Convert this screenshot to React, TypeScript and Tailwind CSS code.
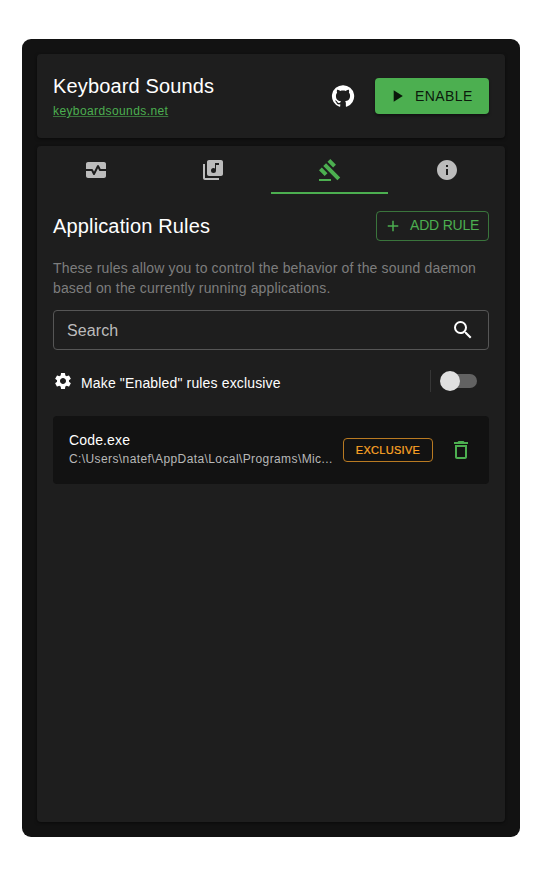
import React from "react";
import {
  MdMonitorHeart,
  MdLibraryMusic,
  MdGavel,
  MdInfo,
  MdPlayArrow,
  MdAdd,
  MdSearch,
  MdSettings,
  MdDeleteOutline,
} from "react-icons/md";

const tabs = [
  { name: "status", Icon: MdMonitorHeart },
  { name: "profiles", Icon: MdLibraryMusic },
  { name: "rules", Icon: MdGavel },
  { name: "info", Icon: MdInfo },
];

function GitHubIcon() {
  return (
    <svg viewBox="0 0 24 24" className="size-6 fill-white">
      <path d="M12 1.27a11 11 0 00-3.48 21.46c.55.09.73-.28.73-.55v-1.84c-3.03.64-3.67-1.46-3.67-1.46-.55-1.29-1.28-1.65-1.28-1.65-.92-.65.1-.65.1-.65 1.1 0 1.73 1.1 1.73 1.1.92 1.65 2.57 1.2 3.21.92a2 2 0 01.64-1.47c-2.47-.27-5.04-1.19-5.04-5.5 0-1.1.46-2.1 1.2-2.84a3.76 3.76 0 010-2.93s.91-.28 3.11 1.1c1.8-.49 3.7-.49 5.5 0 2.1-1.38 3.02-1.1 3.02-1.1a3.76 3.76 0 01.1 2.93c.83.74 1.2 1.74 1.2 2.94 0 4.21-2.57 5.13-5.04 5.4.45.37.82.92.82 2.02v3.03c0 .27.1.64.73.55A11 11 0 0012 1.27" />
    </svg>
  );
}

function Header() {
  return (
    <header className="flex h-[84px] shrink-0 items-center rounded bg-[#1e1e1e] px-4 shadow-[0_1px_3px_rgba(0,0,0,0.5)]">
      <div className="flex-1 pb-0.5">
        <h1 className="text-[20px] leading-8 tracking-[0.15px]">Keyboard Sounds</h1>
        <a className="block text-[12px] leading-[18px] tracking-[0.4px] text-[#4caf50] underline decoration-[#4caf50]/60">
          keyboardsounds.net
        </a>
      </div>
      <GitHubIcon />
      <button className="ml-5 flex h-9 w-[114px] items-center rounded bg-[#4caf50] pl-3 text-[14px] tracking-[0.4px] text-black/87 shadow-[0_2px_3px_rgba(0,0,0,0.4)]">
        <MdPlayArrow className="mr-2 size-5" />
        ENABLE
      </button>
    </header>
  );
}

function Tabs() {
  return (
    <nav className="grid h-12 shrink-0 grid-cols-4">
      {tabs.map(({ name, Icon }) => (
        <button
          key={name}
          className={
            name === "rules"
              ? "flex items-center justify-center border-b-2 border-[#4caf50] text-[#4caf50]"
              : "flex items-center justify-center border-b-2 border-transparent text-[#bcbcbc]"
          }
        >
          <Icon className="mt-0.5 size-6" />
        </button>
      ))}
    </nav>
  );
}

function RuleRow() {
  return (
    <div className="mt-6 flex h-[68px] items-center rounded bg-[#121212] px-4">
      <div className="w-[266px]">
        <div className="-mt-px mb-px text-[14px] leading-[18px] tracking-[0.15px]">Code.exe</div>
        <div className="truncate text-[12px] leading-[18px] tracking-[0.4px] text-[#b8b8b8]">
          {"C:\\Users\\natef\\AppData\\Local\\Programs\\Mic..."}
        </div>
      </div>
      <button className="ml-2 h-6 w-[90px] rounded border border-[#b97a22] text-[11px] tracking-[0.3px] text-[#ffa726] [-webkit-text-stroke:0.2px_#ffa726]">
        EXCLUSIVE
      </button>
      <MdDeleteOutline className="ml-4 size-6 text-[#4caf50]" />
    </div>
  );
}

export default function App() {
  return (
    <div className="h-[876px] w-[540px] bg-white pt-[39px] pl-[22px] font-['Liberation_Sans',Arial,sans-serif] text-white">
      <div className="flex h-[798px] w-[498px] flex-col gap-2 rounded-[9px] bg-[#121212] p-[15px]">
        <Header />
        <main className="flex flex-1 flex-col rounded bg-[#1e1e1e] shadow-[0_1px_3px_rgba(0,0,0,0.5)]">
          <Tabs />
          <section className="px-4 pt-[17px]">
            <div className="flex h-[30px] items-center justify-between">
              <h2 className="text-[20px] leading-8 tracking-[0.15px]">Application Rules</h2>
              <button className="flex h-[30px] w-[113px] items-center rounded border border-[#4caf50]/60 pl-[7px] text-[14px] tracking-[-0.2px] text-[#4caf50]">
                <MdAdd className="mr-2 size-[18px]" />
                <span className="pb-0.5">ADD RULE</span>
              </button>
            </div>
            <p className="mt-[17px] text-[14px] leading-5 tracking-[0.15px] text-[#7d7d7d]">
              These rules allow you to control the behavior of the sound daemon based on the
              currently running applications.
            </p>
            <div className="mt-3 flex h-10 items-center justify-between rounded border border-[#565656] px-[13px]">
              <span className="mt-px text-[16px] tracking-[0.1px] text-[#bcbcbc]">Search</span>
              <MdSearch className="size-6" />
            </div>
            <div className="mt-5 flex h-[22px] items-center">
              <MdSettings className="size-5" />
              <span className="mt-1 ml-2 flex-1 text-[14px] tracking-[0.15px]">
                Make "Enabled" rules exclusive
              </span>
              <div className="mr-3 flex items-center border-l border-[#363636] py-px pl-[9px]">
                <div className="z-10 size-5 rounded-full bg-[#e0e0e0]" />
                <div className="-ml-2.5 h-3.5 w-[27px] rounded-r-full bg-[#626262]" />
              </div>
            </div>
            <RuleRow />
          </section>
        </main>
      </div>
    </div>
  );
}
